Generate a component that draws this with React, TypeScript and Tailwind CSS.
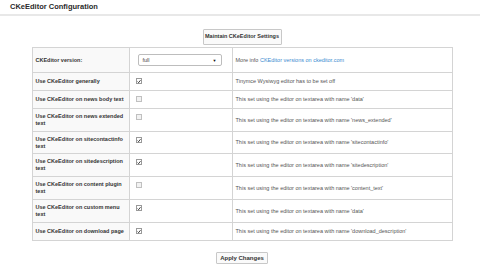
import React from "react";

type Row = {
  label: string;
  checked?: boolean;
  info: React.ReactNode;
  h: string;
};

const rows: Row[] = [
  { label: "Use CKeEditor generally", checked: true, info: "Tinymce Wysiwyg editor has to be set off", h: "h-[18px]" },
  { label: "Use CKeEditor on news body text", checked: false, info: "This set using the editor on textarea with name 'data'", h: "h-[18px]" },
  { label: "Use CKeEditor on news extended text", checked: false, info: "This set using the editor on textarea with name 'news_extended'", h: "h-[23px]" },
  { label: "Use CKeEditor on sitecontactinfo text", checked: true, info: "This set using the editor on textarea with name 'sitecontactinfo'", h: "h-[22px]" },
  { label: "Use CKeEditor on sitedescription text", checked: true, info: "This set using the editor on textarea with name 'sitedescription'", h: "h-[23px]" },
  { label: "Use CKeEditor on content plugin text", checked: false, info: "This set using the editor on textarea with name 'content_text'", h: "h-[23px]" },
  { label: "Use CKeEditor on custom menu text", checked: true, info: "This set using the editor on textarea with name 'data'", h: "h-[23px]" },
  { label: "Use CKeEditor on download page", checked: true, info: "This set using the editor on textarea with name 'download_description'", h: "h-[18px]" },
];

function Box({ checked }: { checked?: boolean }) {
  return (
    <span
      className={
        checked
          ? "flex w-[6px] h-[6px] items-center justify-center border border-[#9a9a9a] bg-white"
          : "flex w-[6px] h-[6px] items-center justify-center border border-[#c0c0c0] bg-[#f2f2f2]"
      }
    >
      {checked && (
        <svg width="5" height="5" viewBox="0 0 10 10">
          <path d="M1.5 5.2 L4 7.8 L8.8 1.8" fill="none" stroke="#111" strokeWidth="2" />
        </svg>
      )}
    </span>
  );
}

export default function App() {
  return (
    <div className="w-[480px] h-[270px] bg-white overflow-hidden font-['Liberation_Sans',Arial,sans-serif]">
      {/* header */}
      <div className="h-[16px] border-b-2 border-[#e8e8e8] pl-[10px] flex items-center">
        <span className="text-[7.5px] leading-[8px] font-bold text-[#2a2a2a]">CKeEditor Configuration</span>
      </div>

      <div className="w-[420px] ml-[32px] mt-[13px] flex flex-col items-center">
        <button className="h-[16px] w-[79px] border border-[#c8c8c8] rounded-[1px] bg-[#fafafa] text-[5.5px] font-bold text-[#333] leading-none">
          Maintain CKeEditor Settings
        </button>

        <table className="mt-[2px] w-[420px] table-fixed border-collapse text-[5.5px] leading-[7px]">
          <colgroup>
            <col className="w-[97px]" />
            <col className="w-[103px]" />
            <col className="w-[220px]" />
          </colgroup>
          <tbody>
            <tr className="h-[25px]">
              <td className="border border-[#d4d4d4] bg-[#f9f9f9] pl-[3px] pr-[2px] font-bold text-[#333] align-middle">
                CKEditor version:
              </td>
              <td className="border border-[#d4d4d4] pl-[8px] align-middle">
                <div className="w-[84px] h-[12px] border border-[#bdbdbd] rounded-[2px] bg-white flex items-center justify-between px-[4px] text-[#444]">
                  <span>full</span>
                  <span className="text-[4px] text-[#111]">▼</span>
                </div>
              </td>
              <td className="border border-[#d4d4d4] pl-[3px] text-[#555] align-middle">
                More info <span className="text-[#3b8bd0]">CKEditor versions on ckeditor.com</span>
              </td>
            </tr>
            {rows.map((r) => (
              <tr key={r.label} className={r.h}>
                <td className="border border-[#d4d4d4] bg-[#f9f9f9] pl-[3px] pr-[2px] font-bold text-[#333] align-middle">
                  {r.label}
                </td>
                <td className="border border-[#d4d4d4] pl-[6px] pt-[5px] align-top">
                  <Box checked={r.checked} />
                </td>
                <td className="border border-[#d4d4d4] pl-[3px] text-[#555] align-middle">{r.info}</td>
              </tr>
            ))}
          </tbody>
        </table>

        <button className="mt-[11px] h-[12px] w-[52px] border border-[#c8c8c8] rounded-[1px] bg-[#fafafa] text-[6px] font-bold text-[#333] leading-none">
          Apply Changes
        </button>
      </div>
    </div>
  );
}
